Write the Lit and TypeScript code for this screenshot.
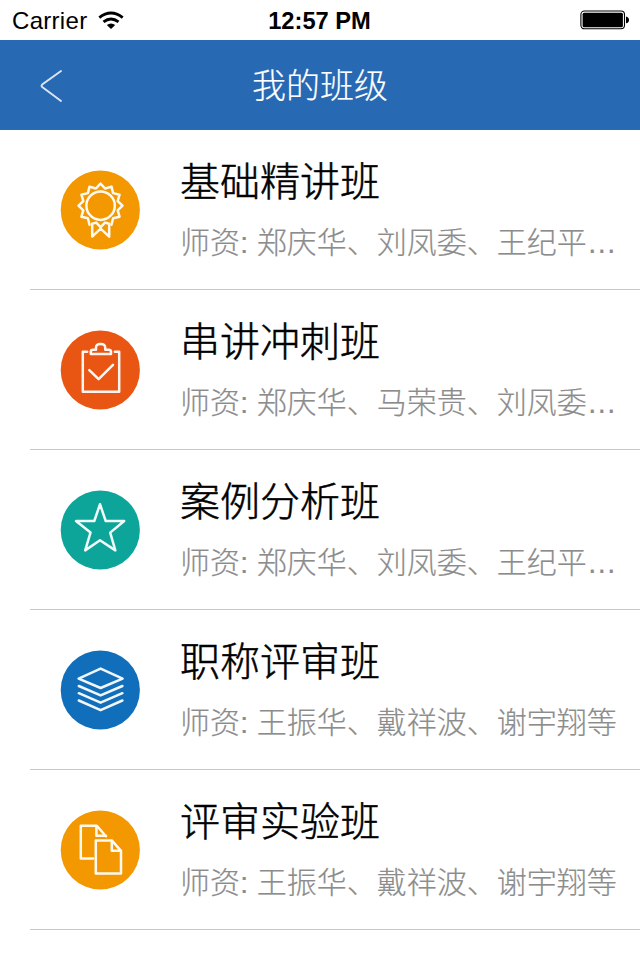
import { LitElement, html, css, svg } from "lit";
import { customElement } from "lit/decorators.js";

const round = (n: number) => n.toFixed(2);

// Twelve-pointed rosette edge, alternating between the two radii.
const rosette = Array.from({ length: 24 }, (_, i) => {
  const r = i % 2 ? 17.8 : 22;
  const a = (i * Math.PI) / 12 - Math.PI / 2;
  return `${round(40.5 + r * Math.cos(a))},${round(35.7 + r * Math.sin(a))}`;
});
const rosettePoints = [...rosette.slice(14), ...rosette.slice(0, 11)].join(" ");

const icons = {
  medal: svg`
    <circle cx="40.6" cy="35.7" r="14.2"/>
    <polyline points=${rosettePoints}/>
    <path d="M32.2 53.8V66.6L40.6 58.6L49.2 66.6V53.8M32.2 53.8L36.2 52.6L40.6 57.2L45 52.6L49.2 53.8"/>`,
  clipboard: svg`
    <path d="M27.2 21.7H22.8V61.7H59.2V21.7H54.8"/>
    <path d="M30.8 24V21.8Q30.8 19.8 33 19.8H36V17.5Q36 13.9 40.6 13.9T45.2 17.5V19.8H48.6Q51 19.8 51 21.8V24Z"/>
    <path d="M29.3 40.2L38.6 49.2L53 34.8"/>`,
  star: svg`<path d="M40 14.2L45.7 31H64.2L50.2 42.6L55.3 60.4L40 50.2L25.2 60.4L30.5 42.6L16 31H34.3Z"/>`,
  layers: svg`
    <path d="M40.6 18.6L62.6 28.6L40.6 38L18.6 28.6Z"/>
    <path d="M18.8 36L40.6 45.4L62.4 36M18.8 43.2L40.6 52.7L62.4 43.2M18.8 50.5L40.6 60.2L62.4 50.5"/>`,
  pages: svg`
    <path d="M33.2 48.5H20.8V15.7H36.8L46 26.3M36.4 16V25.8H46"/>
    <path d="M35.8 30.4H51.8L61 40.8V63.5H35.8ZM51.8 30.4V40.8H61"/>`,
};

const classes = [
  { name: "基础精讲班", teachers: "郑庆华、刘凤委、王纪平…", color: "#f39800", icon: icons.medal },
  { name: "串讲冲刺班", teachers: "郑庆华、马荣贵、刘凤委…", color: "#e95513", icon: icons.clipboard },
  { name: "案例分析班", teachers: "郑庆华、刘凤委、王纪平…", color: "#0da599", icon: icons.star },
  { name: "职称评审班", teachers: "王振华、戴祥波、谢宇翔等", color: "#116eba", icon: icons.layers },
  { name: "评审实验班", teachers: "王振华、戴祥波、谢宇翔等", color: "#f39800", icon: icons.pages },
];

@customElement("app-root")
export class AppRoot extends LitElement {
  static styles = css`
    :host {
      display: block;
      height: 960px;
      overflow: hidden;
      background: #fff;
      font-family: "Liberation Sans", "Noto Sans CJK SC", sans-serif;
      font-weight: 300;
    }
    .status, .nav {
      display: grid;
      grid-template-columns: 1fr auto 1fr;
      align-items: center;
    }
    .status { height: 40px; color: #000; font-size: 24px; font-weight: 400; }
    .carrier { display: flex; align-items: center; gap: 11px; padding-left: 12px; letter-spacing: 0.3px; }
    .carrier span, .time { padding-top: 2px; }
    .time { font-weight: 700; font-size: 23.7px; margin-left: -1px; }
    .battery { justify-self: end; margin-right: 10px; }
    .nav { height: 90px; background: #2769b3; color: #fff; }
    .back { margin-left: 39px; margin-top: 1px; }
    .heading { font-size: 34px; line-height: 88px; padding-top: 2px; -webkit-text-stroke: 0.2px #fff; }
    svg { display: block; }
    .row {
      display: flex;
      box-sizing: border-box;
      height: 160px;
      margin-left: 30px;
      padding-left: 30px;
      border-bottom: 1px solid #c8c7cc;
    }
    .icon { flex: none; margin: 40px 40px 0 0; }
    .glyph { fill: none; stroke: #fff; stroke-opacity: 0.94; stroke-width: 2.5; stroke-linecap: round; stroke-linejoin: round; }
    .name { font-size: 40px; line-height: 60px; margin-top: 22px; color: #000; white-space: nowrap; -webkit-text-stroke: 0.5px #000; }
    .teachers { font-size: 30px; line-height: 40px; margin-top: 11px; color: #8c8c8c; white-space: nowrap; -webkit-text-stroke: 0.2px #8c8c8c; }
  `;

  render() {
    return html`
      <div class="status">
        <div class="carrier">
          <span>Carrier</span>
          <svg width="26" height="19" viewBox="0 0 26 19">
            <g fill="none" stroke="#000" stroke-width="2.9">
              <path d="M1.3 6.6Q13 -2.4 24.7 6.6"/>
              <path d="M5.5 10.9Q13 4.9 20.5 10.9"/>
            </g>
            <path d="M8.8 14Q13 10.8 17.2 14L13 18Z"/>
          </svg>
        </div>
        <div class="time">12:57 PM</div>
        <svg class="battery" width="50" height="20" viewBox="0 0 50 20">
          <rect x=".9" y="1" width="43.6" height="17.8" rx="3.5" fill="none" stroke="#000" stroke-width="1.1"/>
          <rect x="2.6" y="2.7" width="40.3" height="14.5" rx="1.5"/>
          <path d="M46 6.5Q49 7 49 10T46 13.3Z"/>
        </svg>
      </div>
      <div class="nav">
        <svg class="back" width="26" height="36" viewBox="0 0 26 36">
          <path d="M22 3L3.2 16.5Q2 18 3.2 19L22 33" fill="none" stroke="#dbe6f4" stroke-width="1.9" stroke-linecap="round"/>
        </svg>
        <div class="heading">我的班级</div>
      </div>
      <div>
        ${classes.map((c) => html`
          <div class="row">
            <svg class="icon" width="80" height="80" viewBox="0 0 80 80">
              <circle cx="40.3" cy="40" r="39.6" fill=${c.color}/>
              <g class="glyph">${c.icon}</g>
            </svg>
            <div>
              <div class="name">${c.name}</div>
              <div class="teachers">师资: ${c.teachers}</div>
            </div>
          </div>`)}
      </div>
    `;
  }
}
